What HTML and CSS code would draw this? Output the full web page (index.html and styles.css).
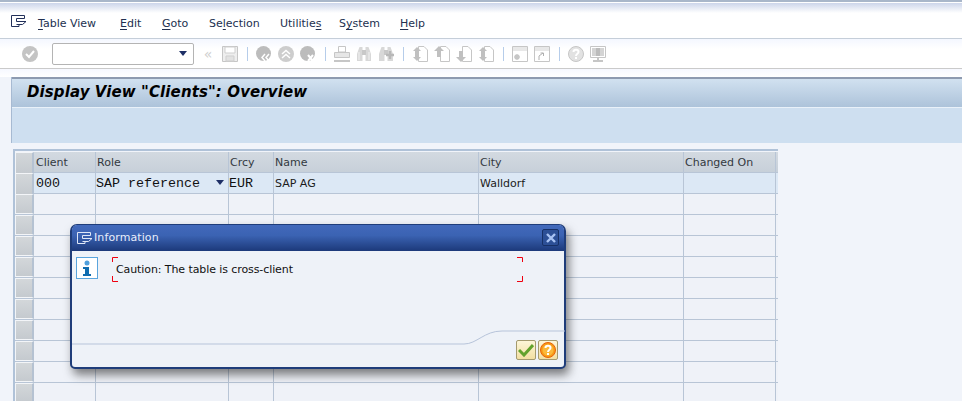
FILE: index.html
```html
<!DOCTYPE html>
<html lang="en">
<head>
<meta charset="utf-8">
<title>Display View "Clients": Overview</title>
<link rel="stylesheet" href="styles.css">
</head>
<body>
<div class="top-stripe"></div>
<nav class="menubar">
  <svg class="cmd-icon" width="16" height="12" viewBox="0 0 16 12"><path d="M.5.5H13.5V3.5M13.5 3.5H5.5V6.5H15M15 6.5L11.5 9.5H5.5M8 9.5V11.5H.5V.5" fill="none" stroke="#22305a"/></svg>
  <div class="menus">
    <span><u>T</u>able View</span><span><u>E</u>dit</span><span><u>G</u>oto</span><span>Se<u>l</u>ection</span><span>Utilitie<u>s</u></span><span>S<u>y</u>stem</span><span><u>H</u>elp</span>
  </div>
</nav>
<div class="toolbar">
  <svg class="ic" viewBox="0 0 16 16"><circle cx="8" cy="8" r="8" fill="#c4c4c4"/><path d="M4 8l3 3 5-6" fill="none" stroke="#fff" stroke-width="2"/></svg>
  <div class="combo"><span class="combo-arrow"></span></div>
  <span class="chev">«</span>
  <svg class="ic" viewBox="0 0 16 16"><path d="M.5.5H15.5V15.5H.5Z" fill="#eee" stroke="#c6c6c6"/><path d="M3 1V7H13V1Z" fill="#fff" stroke="#cfcfcf"/><path d="M4 10H12V15H4Z" fill="#e2e2e2" stroke="#cfcfcf"/></svg>
  <i class="sep"></i>
  <svg class="ic" viewBox="0 0 16 16"><circle cx="7.500" cy="7.500" r="7.500" fill="#bcbcbc"/><path d="M9 8l-3 3.500 3 3.500M13 8l-3 3.500 3 3.500" fill="none" stroke="#fff" stroke-width="1.500"/></svg>
  <svg class="ic" viewBox="0 0 16 16"><circle cx="8" cy="8" r="8" fill="#cdcdcd"/><path d="M4 8l4-3.500 4 3.500M4 12l4-3.500 4 3.500" fill="none" stroke="#fff" stroke-width="1.500"/></svg>
  <svg class="ic" viewBox="0 0 16 16"><circle cx="7.500" cy="7.500" r="7.500" fill="#bcbcbc"/><path d="M8 9l5 6M13 9l-5 6" fill="none" stroke="#fff" stroke-width="2"/></svg>
  <i class="sep"></i>
  <svg class="ic" viewBox="0 0 16 16"><path d="M4.500.5H11.500V6H4.500Z" fill="#fff" stroke="#c6c6c6"/><path d="M.5 6.500H15.500V11.500H.5Z" fill="#e6e6e6" stroke="#c6c6c6"/><path d="M0 14H16V16H0Z" fill="#c6c6c6"/></svg>
  <svg class="ic" viewBox="0 0 16 16"><path d="M2 5L3.500 1H6.500V15H1V8ZM14 5L12.500 1H9.500V15H15V8Z" fill="#d8d8d8"/><path d="M6 4H10V9H6Z" fill="#c8c8c8"/><path d="M3 6V14M13 6V14" stroke="#f2f2f2"/></svg>
  <svg class="ic" viewBox="0 0 16 16"><path d="M2 5L3.500 1H6.500V15H1V8ZM14 5L12.500 1H9.500V15H15V8Z" fill="#d8d8d8"/><path d="M6 4H10V9H6Z" fill="#c8c8c8"/><path d="M12 5V13M8 9H16" stroke="#b8b8b8" stroke-width="2.500"/></svg>
  <i class="sep"></i>
  <svg class="ic" viewBox="0 0 16 16"><path d="M6.500.5H12L15.500 4V15.500H6.500Z" fill="#fff" stroke="#c6c6c6"/><path d="M5 1L9 5H1ZM3 5H7V8H3ZM5 15L9 11H1ZM3 8H7V11H3Z" fill="#c0c0c0"/></svg>
  <svg class="ic" viewBox="0 0 16 16"><path d="M6.500.5H12L15.500 4V15.500H6.500Z" fill="#fff" stroke="#c6c6c6"/><path d="M5 0L10 5H7V11H3V5H0Z" fill="#c0c0c0"/></svg>
  <svg class="ic" viewBox="0 0 16 16"><path d="M6.500.5H12L15.500 4V15.500H6.500Z" fill="#fff" stroke="#c6c6c6"/><path d="M5 16L10 11H7V5H3V11H0Z" fill="#c0c0c0"/></svg>
  <svg class="ic" viewBox="0 0 16 16"><path d="M6.500.5H12L15.500 4V15.500H6.500Z" fill="#fff" stroke="#c6c6c6"/><path d="M5 1L9 5H1ZM3 5H7V8H3ZM5 15L9 11H1ZM3 8H7V11H3Z" fill="#c0c0c0"/></svg>
  <i class="sep"></i>
  <svg class="ic" viewBox="0 0 16 16"><path d="M.5.5H15.500V15.500H.5Z" fill="#fff" stroke="#c6c6c6"/><path d="M1 1H15V5H1Z" fill="#e8e8e8"/><path d="M5 8V14M2 11H8M3 9L7 13M7 9L3 13" stroke="#c6c6c6" stroke-width="1.500"/></svg>
  <svg class="ic" viewBox="0 0 16 16"><path d="M.5.5H15.500V15.500H.5Z" fill="#fff" stroke="#c6c6c6"/><path d="M1 1H15V5H1Z" fill="#e8e8e8"/><path d="M5 14V10L9 7M6.500 7H9.500V10" fill="none" stroke="#b0b0b0"/></svg>
  <i class="sep"></i>
  <svg class="ic" viewBox="0 0 16 16"><circle cx="8" cy="8" r="7.500" fill="#e2e2e2" stroke="#c6c6c6"/><path d="M5.500 6C5.500 3 10.500 3 10.500 6C10.500 8 8 7.500 8 10" fill="none" stroke="#fff" stroke-width="2"/><path d="M7 11H9V13H7Z" fill="#fff"/></svg>
  <svg class="ic" viewBox="0 0 16 16"><path d="M.5.5H15.500V11.500H.5Z" fill="#fff" stroke="#c6c6c6"/><path d="M2 2H14V10H2Z" fill="#d4d4d4"/><path d="M6 2H10V10H6Z" fill="#bcbcbc"/><path d="M7 12H9V14H7ZM3 14H13V16H3Z" fill="#c6c6c6"/></svg>
</div>
<div class="gap-top"></div>
<main class="content">
  <h1 class="title">Display View "Clients": Overview</h1>
  <div class="band"></div>
</main>
<div class="table-area">
  <div class="grid">
    <div class="row head"><span class="sel"></span><span class="c1">Client</span><span class="c2">Role</span><span class="c3">Crcy</span><span class="c4">Name</span><span class="c5">City</span><span class="c6">Changed On</span></div>
    <div class="row first"><span class="sel"></span><span class="c1 mono">000</span><span class="c2 mono role">SAP reference<i class="drop"></i></span><span class="c3 mono">EUR</span><span class="c4">SAP AG</span><span class="c5">Walldorf</span><span class="c6"></span></div>
    <div class="row"><span class="sel"></span><span class="c1"></span><span class="c2"></span><span class="c3"></span><span class="c4"></span><span class="c5"></span><span class="c6"></span></div>
    <div class="row"><span class="sel"></span><span class="c1"></span><span class="c2"></span><span class="c3"></span><span class="c4"></span><span class="c5"></span><span class="c6"></span></div>
    <div class="row"><span class="sel"></span><span class="c1"></span><span class="c2"></span><span class="c3"></span><span class="c4"></span><span class="c5"></span><span class="c6"></span></div>
    <div class="row"><span class="sel"></span><span class="c1"></span><span class="c2"></span><span class="c3"></span><span class="c4"></span><span class="c5"></span><span class="c6"></span></div>
    <div class="row"><span class="sel"></span><span class="c1"></span><span class="c2"></span><span class="c3"></span><span class="c4"></span><span class="c5"></span><span class="c6"></span></div>
    <div class="row"><span class="sel"></span><span class="c1"></span><span class="c2"></span><span class="c3"></span><span class="c4"></span><span class="c5"></span><span class="c6"></span></div>
    <div class="row"><span class="sel"></span><span class="c1"></span><span class="c2"></span><span class="c3"></span><span class="c4"></span><span class="c5"></span><span class="c6"></span></div>
    <div class="row"><span class="sel"></span><span class="c1"></span><span class="c2"></span><span class="c3"></span><span class="c4"></span><span class="c5"></span><span class="c6"></span></div>
    <div class="row"><span class="sel"></span><span class="c1"></span><span class="c2"></span><span class="c3"></span><span class="c4"></span><span class="c5"></span><span class="c6"></span></div>
    <div class="row"><span class="sel"></span><span class="c1"></span><span class="c2"></span><span class="c3"></span><span class="c4"></span><span class="c5"></span><span class="c6"></span></div>
  </div>
</div>
<section class="dialog">
  <header class="dlg-title">
    <svg class="dlg-cmd" width="16" height="12" viewBox="0 0 16 12"><path d="M.5.5H13.5V3.500M13.5 3.500H5.500V6.500H15M15 6.500L11.500 9.500H5.500M8 9.500V11.500H.5V.5" fill="none" stroke="#dfe7f7"/></svg>
    <span>Information</span>
    <span class="dlg-close"><svg width="10" height="10" viewBox="0 0 10 10"><path d="M1 1L9 9M9 1L1 9" stroke="#a9c3f4" stroke-width="2.400"/></svg></span>
  </header>
  <div class="dlg-body">
    <svg class="info" width="22" height="22" viewBox="0 0 22 22"><rect x=".5" y=".5" width="21" height="21" fill="#fff" stroke="#5aa5dd"/><circle cx="11" cy="6" r="2.500" fill="#4f9fdc"/><path d="M7 10H13V17H15V19H7V17H9V12H7Z" fill="#0f6cb0"/></svg>
    <div class="msg">
      <svg class="brackets" width="411" height="25" viewBox="0 0 411 25"><path d="M6 .5H.5V5M.5 19V24.500H6M405 .5H410.500V5M410.500 19V24.500H405" fill="none" stroke="#f0000f"/></svg>
      Caution: The table is cross-client
    </div>
  </div>
  <svg class="curve" width="493" height="15" viewBox="0 0 493 15"><path d="M0 14H392C405 14 412 1 430 1H493" fill="none" stroke="#b7c4da"/></svg>
  <div class="dlg-actions">
    <span class="btn"><svg width="16" height="14" viewBox="0 0 16 14"><path d="M1 7L6 12L15 2" fill="none" stroke="#62a22c" stroke-width="3"/></svg></span>
    <span class="btn"><svg width="16" height="16" viewBox="0 0 16 16"><circle cx="8" cy="8" r="7.500" fill="#f79a16" stroke="#e8630a"/><circle cx="8" cy="8" r="5.500" fill="#fbb93a"/><path d="M5.500 6C5.500 3 10.500 3 10.500 6C10.500 8 8 7.500 8 10" fill="none" stroke="#fff" stroke-width="2"/><path d="M7 11H9V13H7Z" fill="#fff"/></svg></span>
  </div>
</section>
</body>
</html>
```
FILE: styles.css
```css
html, body { margin: 0; height: 401px; overflow: hidden; }
body {
  position: relative;
  background: #f1f4fa;
  font: 11px "DejaVu Sans", sans-serif;
  color: #1b1b1b;
}
.top-stripe {
  height: 3px;
  background: linear-gradient(#a9b7ca 0 2px, #fff 2px);
}
.menubar {
  height: 36px;
  box-sizing: border-box;
  display: flex;
  align-items: flex-start;
  padding: 12px 0 0 11px;
  background: linear-gradient(#ccd5ea, #fff 10px);
  border-bottom: 1px solid #c5ced9;
}
.cmd-icon { flex: none; }
.menus {
  display: grid;
  grid-template-columns: 82px 42px 47px 71px 59px 61px auto;
  margin-left: 11px;
  color: #22304f;
  line-height: 18px;
}
.menus u { text-underline-offset: 2px; }
.toolbar {
  height: 30px;
  box-sizing: border-box;
  display: flex;
  align-items: center;
  gap: 6px;
  padding-left: 22px;
  background: linear-gradient(#f4f7ff, #fff 10px);
  border-bottom: 1px solid #cacaca;
}
.ic { width: 16px; height: 16px; flex: none; }
.combo {
  width: 142px;
  height: 22px;
  box-sizing: border-box;
  margin: 0 0 0 8px;
  background: #fff;
  border: 1px solid #b4b4b4;
  border-radius: 2px;
  display: flex;
  align-items: center;
  justify-content: flex-end;
  padding-right: 6px;
}
.combo-arrow, .drop {
  display: inline-block;
  width: 0;
  height: 0;
  border: 4px solid transparent;
  border-top: 5px solid #1e2f66;
  border-bottom: 0;
}
.chev { width: 16px; text-align: center; color: #cfcfcf; font-size: 14px; line-height: 16px; }
.sep {
  width: 6px;
  height: 14px;
  background: linear-gradient(#b6cdea, #b6cdea) center / 1px 100% no-repeat;
}
.gap-top { height: 8px; background: linear-gradient(#f6f8ff, #fff); }
.content {
  margin-left: 11px;
  border-left: 1px solid #a7bad2;
}
.title {
  margin: 0;
  height: 31px;
  box-sizing: border-box;
  padding-left: 15px;
  border-top: 2px solid #8d9ab0;
  border-bottom: 1px solid #e9f1f9;
  background: linear-gradient(#d1e1f0, #adc3da);
  color: #000;
  font: italic bold 15px/27px "DejaVu Sans", sans-serif;
  letter-spacing: .1px;
}
.band { height: 35px; background: #cedff0; }
.table-area { margin: 6px 0 0 13px; }
.grid {
  width: 763px;
  border-left: 2px solid #b0c2d8;
  border-top: 2px solid #b0c2d8;
  padding-top: 1px;
}
.row {
  display: grid;
  grid-template-columns: 19px 62px 133px 45px 205px 205px 92px;
  height: 21px;
  box-sizing: border-box;
  background: #eff2f8;
  border-bottom: 1px solid #b8c5d6;
}
.row > span {
  box-sizing: border-box;
  border-right: 1px solid #b8c5d6;
  padding-left: 1px;
  line-height: 22px;
  white-space: nowrap;
}
.row > .c1 { padding-left: 2px; }
.row > .sel {
  padding: 0;
  background: linear-gradient(#d3d7da, #c5cacf);
  border: 1px solid #f3f5f8;
  border-right: 2px solid #b5c2d2;
}
.head { background: linear-gradient(#d3dae1, #c7d0d9); color: #33393f; }
.first { background: #dce8f5; }
.row > .mono {
  font: 13.33px/22px "Liberation Mono", monospace;
  color: #111;
}
.row > .c3.mono, .row > .c2.mono { padding-left: 0; }
.role { position: relative; padding-right: 4px; }
.drop { position: absolute; right: 4px; top: 7px; }
.dialog {
  position: absolute;
  left: 70px;
  top: 224px;
  width: 496px;
  height: 145px;
  box-sizing: border-box;
  border: 2px solid #1f3d7a;
  border-top-width: 1px;
  border-radius: 7px 7px 5px 5px;
  background: #eef2f8;
  box-shadow: 3px 6px 10px rgba(30, 30, 30, .55);
  display: flex;
  flex-direction: column;
}
.dlg-title {
  height: 26px;
  box-sizing: border-box;
  flex: none;
  display: flex;
  align-items: center;
  padding: 0 5px 1px 5px;
  background: linear-gradient(#4269bb, #3b63b3 40%, #1c397a);
  border-radius: 5px 5px 0 0;
  color: #e8eefb;
  font-size: 11px;
  letter-spacing: .1px;
}
.dlg-cmd { margin-right: 1px; }
.dlg-close {
  margin-left: auto;
  width: 15px;
  height: 15px;
  display: flex;
  align-items: center;
  justify-content: center;
  background: #2c4f96;
  border: 1px solid #173066;
  border-radius: 2px;
}
.dlg-body {
  display: flex;
  gap: 14px;
  padding: 6px 0 0 4px;
}
.info { flex: none; }
.msg {
  position: relative;
  width: 411px;
  height: 25px;
  box-sizing: border-box;
  padding-left: 4px;
  line-height: 25px;
  color: #111;
  letter-spacing: -.09px;
}
.brackets { position: absolute; left: 0; top: 0; }
.curve { position: absolute; left: 0; top: 105px; }
.dlg-actions {
  display: flex;
  gap: 2px;
  justify-content: flex-end;
  margin: auto 6px 7px 0;
}
.btn {
  width: 20px;
  height: 20px;
  box-sizing: border-box;
  display: flex;
  align-items: center;
  justify-content: center;
  background: linear-gradient(#fdf6d8, #f2dfa2);
  border: 1px solid #a49a6e;
  border-radius: 2px;
}
```
